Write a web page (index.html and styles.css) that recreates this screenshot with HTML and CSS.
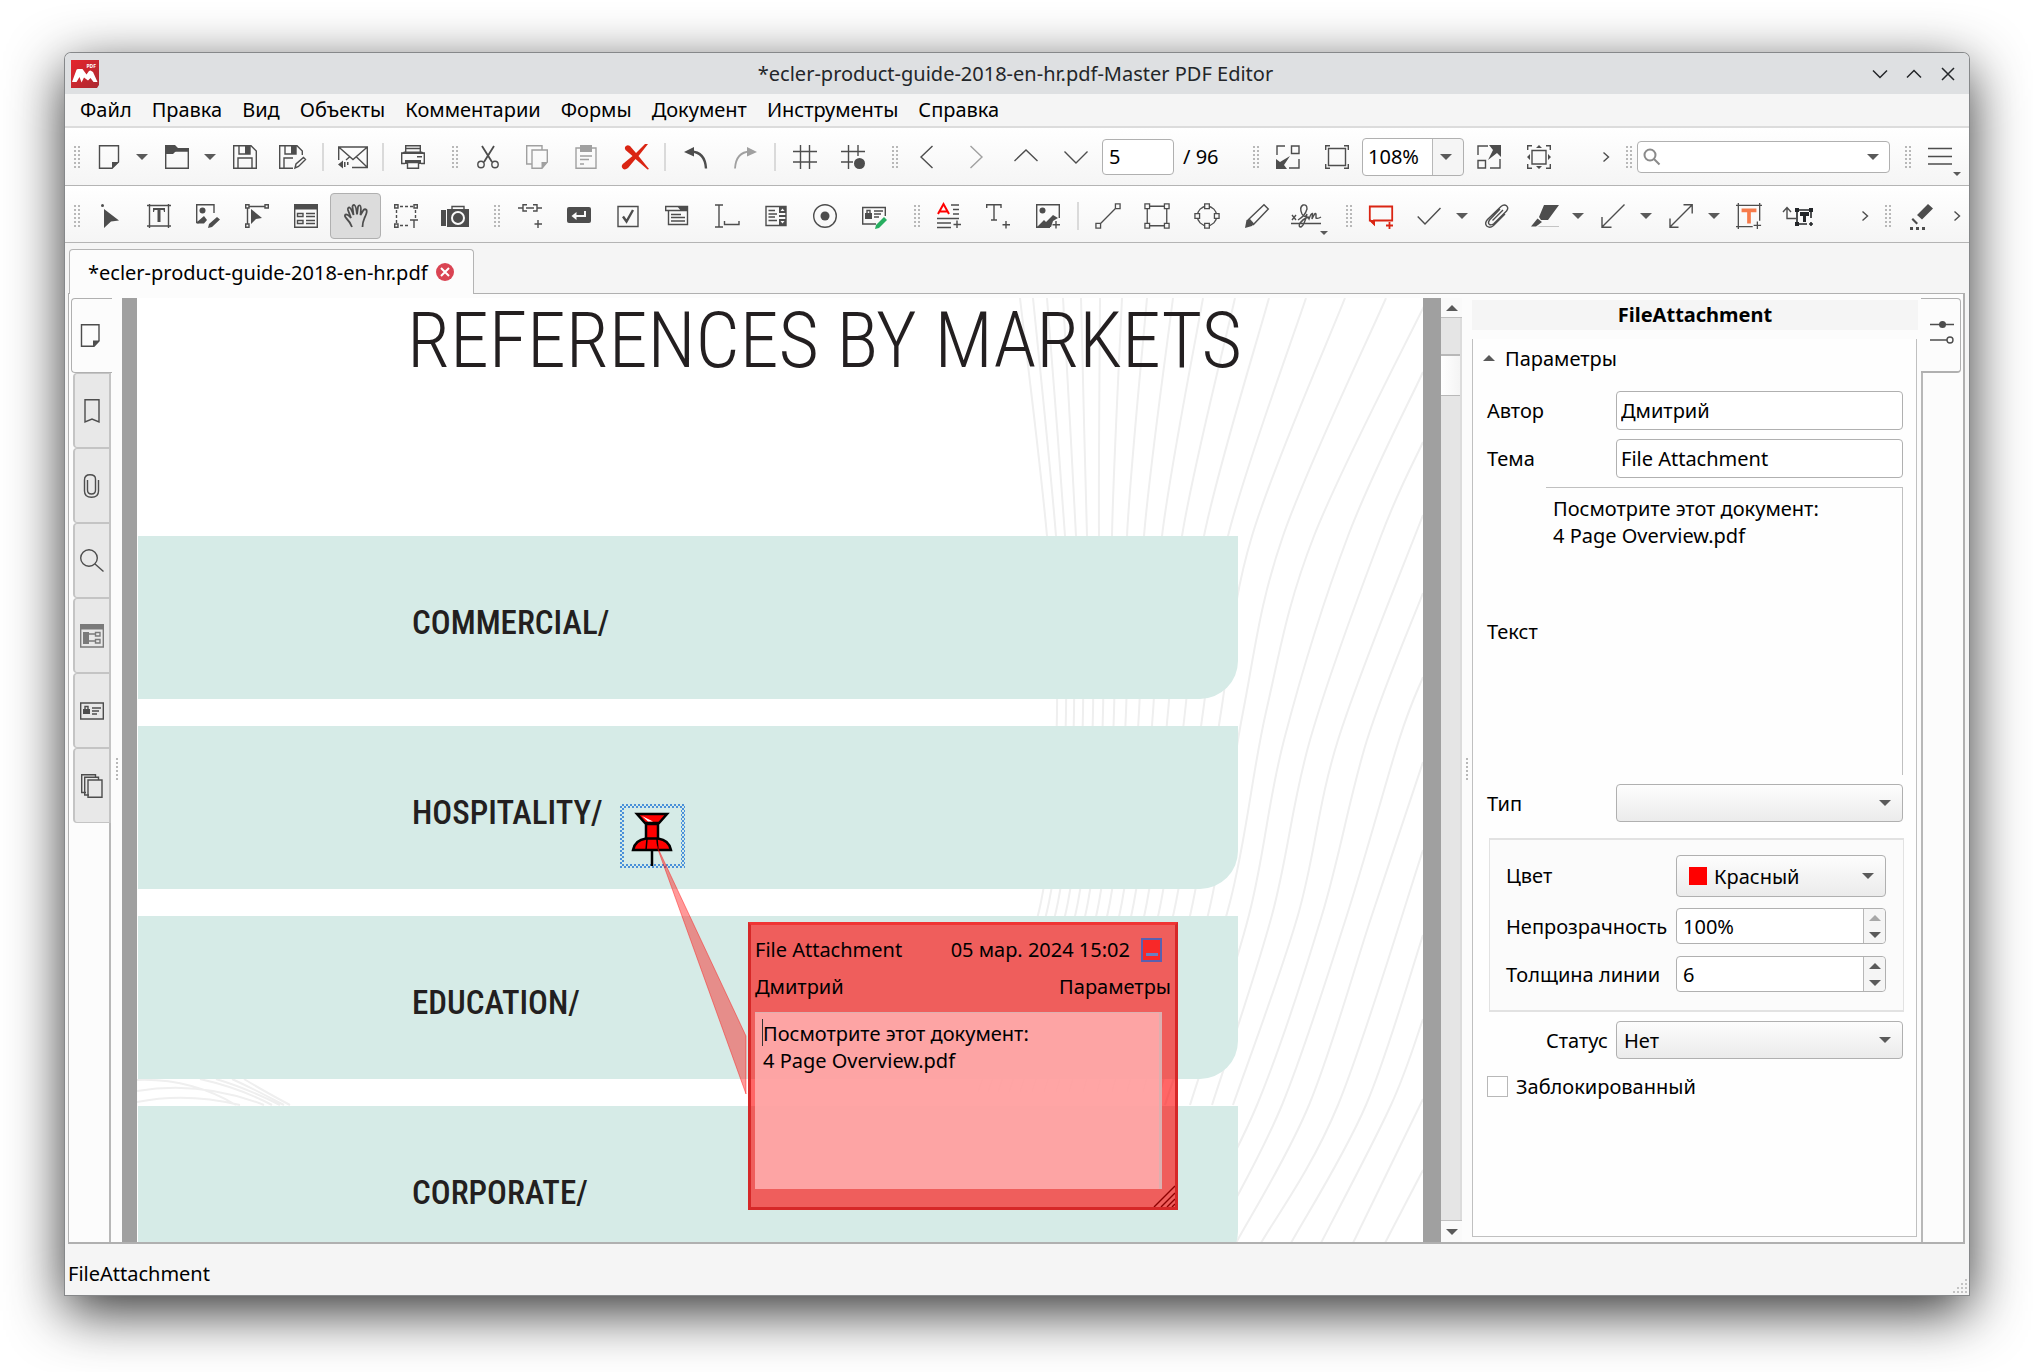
FILE: index.html
```html
<!DOCTYPE html>
<html lang="ru">
<head>
<meta charset="utf-8">
<title>*ecler-product-guide-2018-en-hr.pdf-Master PDF Editor</title>
<link rel="stylesheet" href="styles.css">
</head>
<body>
<div class="window">
  <header class="titlebar">
    <svg class="logo" viewBox="0 0 28 28"><defs><linearGradient id="lg" x1="0" y1="0" x2="1" y2="1"><stop offset="0" stop-color="#e6242b"/><stop offset="1" stop-color="#ab2a32"/></linearGradient></defs><path d="M0 0H28V25L26 28H0Z" fill="url(#lg)"/><path d="M1 22L5.500 9.800Q6 9 7 9H11.500L15.500 14.500L18 11Q18.600 10.400 19.500 10.400L22 12L26.500 22H22.500L19.500 18L17 20.500L13 17.500L10.500 22.500L8.500 17L5.500 22Z" fill="#fff"/><text x="15.500" y="7.600" class="logo-text">PDF</text></svg>
    <h1 class="title">*ecler-product-guide-2018-en-hr.pdf-Master PDF Editor</h1>
    <div class="winbtns">
      <button class="winbtn" aria-label="Свернуть"><svg viewBox="0 0 16 16"><path d="M1 4.500L8 11.500L15 4.500"/></svg></button>
      <button class="winbtn" aria-label="Развернуть"><svg viewBox="0 0 16 16"><path d="M1 11.500L8 4.500L15 11.500"/></svg></button>
      <button class="winbtn" aria-label="Закрыть"><svg viewBox="0 0 16 16"><path d="M2 2L14 14M14 2L2 14"/></svg></button>
    </div>
  </header>

  <nav class="menubar">
    <button class="menu">Файл</button><button class="menu">Правка</button><button class="menu">Вид</button><button class="menu">Объекты</button><button class="menu">Комментарии</button><button class="menu">Формы</button><button class="menu">Документ</button><button class="menu">Инструменты</button><button class="menu">Справка</button>
  </nav>

  <div class="toolbar">
    <span class="grip grip-first"></span>
    <button class="tool" aria-label="Создать"><svg class="ic" viewBox="0 0 24 24"><path d="M2.500 .7H21.500V17L15 23.300H2.500Z"/><path class="f" d="M15 23.500V17H21.700Z"/></svg></button>
    <button class="drop" aria-label="Создать, меню"></button>
    <button class="tool" aria-label="Открыть"><svg class="ic" viewBox="0 0 24 24"><path d="M.7 6H23.300V23.300H.7Z"/><path class="f" d="M0 0H10L13 3H24V6H11L8 9H0Z"/></svg></button>
    <button class="drop" aria-label="Открыть, меню"></button>
    <button class="tool" aria-label="Сохранить"><svg class="ic" viewBox="0 0 24 24"><path d="M.7 .7H18L23.300 6V23.300H.7ZM5 23V13H19V23M6 1V9H17V1"/><path class="f" d="M12 1H17V9H12Z"/></svg></button>
    <button class="tool" aria-label="Сохранить как"><svg class="ic wide" viewBox="0 0 28 24"><path d="M14 23.300H.7V.7H18L23.300 6V10M5 23V13H14M6 1V9H17V1M16 23L17 19L24.500 12.500L26.500 14.500L19.500 21.500Z"/><path class="f" d="M12 1H17V9H12Z"/></svg></button>
    <span class="sep"></span>
    <button class="tool" aria-label="Отправить"><svg class="ic mail" viewBox="0 0 30 24"><path d="M.7 15V2H29.300V22.500H14M.7 2L15 14.500L29.300 2M29 22L18.500 12M11.500 12L8 15"/><path class="f" d="M0 19.500L5 15.500V23.500ZM6 17H7.500V22H6ZM9 17H10.500V20H9Z"/></svg></button>
    <span class="sep"></span>
    <button class="tool" aria-label="Печать"><svg class="ic" viewBox="0 0 24 24"><path d="M4.700 8V.7H19.300V8M5 3.500H19"/><path d="M4 18.500H.7V8H23.300V18.500H20"/><path class="f" d="M3 6.500H21L24 9H0ZM16 11H21V12.500H16ZM4 15H20V19H4Z"/><path class="w" d="M6.500 17.500H17.500V23.300H6.500Z"/></svg></button>
    <span class="grip"></span>
    <div class="group g4">
      <button class="tool" aria-label="Вырезать"><svg class="ic" viewBox="0 0 24 24"><path class="t2" d="M6 1L16 17M18 1L8 17"/><circle cx="5" cy="19.500" r="3.200"/><circle cx="19" cy="19.500" r="3.200"/></svg></button>
      <button class="tool off" aria-label="Копировать"><svg class="ic" viewBox="0 0 24 24"><path d="M7 19H1.700V.7H17V5"/><path d="M7 5H22.300V17L17 23.300H7Z"/><path class="f" d="M16.500 23.500V17H22.500Z"/></svg></button>
      <button class="tool off" aria-label="Вставить"><svg class="ic" viewBox="0 0 24 24"><path d="M2 3H22V23.300H2ZM6 11H18M6 14.500H15M6 19H10"/><path class="f" d="M6 0H18V7H6Z"/></svg></button>
      <button class="tool" aria-label="Удалить"><svg class="ic x" viewBox="0 0 28 26"><path class="red" d="M4 3Q6 0 9 2L15 9L24 0H27L17.500 12L28 25L26.500 25.500L14.500 15L7 24Q3 27 1 23.500Q0 21 3 19L11.500 12L4.500 6Q3.500 4.500 4 3Z"/></svg></button>
    </div>
    <span class="sep"></span>
    <button class="tool t50" aria-label="Отменить"><svg class="ic" viewBox="0 0 24 24"><path class="t3" d="M7 6.500Q21 7 22 23.500"/><path class="f" d="M0 7L10 2V11.500Z"/></svg></button>
    <button class="tool off" aria-label="Повторить"><svg class="ic" viewBox="0 0 24 24"><path class="t2" d="M17 6.500Q3 7 2 23.500"/><path class="f" d="M24 7L14 2V11.500Z"/></svg></button>
    <span class="sep"></span>
    <button class="tool" aria-label="Сетка"><svg class="ic" viewBox="0 0 24 24"><path d="M7.500 0V24M16.500 0V24M0 6.500H24M0 17H24"/></svg></button>
    <button class="tool" aria-label="Привязка к сетке"><svg class="ic" viewBox="0 0 24 24"><path d="M7.500 0V24M17 0V11M0 6.500H24M0 17H12"/><circle class="f" cx="18.500" cy="18.500" r="5.500"/></svg></button>
    <span class="grip"></span>
    <button class="tool" aria-label="Назад"><svg class="ic" viewBox="0 0 24 24"><path d="M17.500 1L6 12L17.500 23"/></svg></button>
    <button class="tool t50 off" aria-label="Вперёд"><svg class="ic" viewBox="0 0 24 24"><path d="M6.500 1L18 12L6.500 23"/></svg></button>
    <button class="tool t50" aria-label="Предыдущая страница"><svg class="ic" viewBox="0 0 24 24"><path d="M.5 16L12 5L23.500 16"/></svg></button>
    <button class="tool t50" aria-label="Следующая страница"><svg class="ic" viewBox="0 0 24 24"><path d="M.5 6.500L12 18L23.500 6.500"/></svg></button>
    <input class="field page-no" id="pageno" type="text" value="5"><label class="page-total" for="pageno">/ 96</label>
    <span class="grip"></span>
    <button class="tool" aria-label="Уменьшить"><svg class="ic" viewBox="0 0 24 24"><path d="M1 10V1H9M15.500 1H23V8.500H15.500ZM23 14V23H13"/><path class="f" d="M0 24V14L4 17L14 11L8 20L11 24Z"/></svg></button>
    <button class="tool t50" aria-label="Вся страница"><svg class="ic" viewBox="0 0 24 24"><path d="M3.500 3.500H20.500V20.500H3.500ZM.7 5V.7H5M19 .7H23.300V5M.7 19V23.300H5M19 23.300H23.300V19"/></svg></button>
    <div class="zoom"><select class="zoom-select" aria-label="Масштаб"><option>108%</option></select></div>
    <button class="tool t50" aria-label="Увеличить"><svg class="ic" viewBox="0 0 24 24"><path d="M1 10V1H11M1 15.500H8.500V23H1ZM23 14V23H13"/><path class="f" d="M24 0V12L20 8L11 15L16 5L12 0Z"/></svg></button>
    <button class="tool t50" aria-label="По ширине"><svg class="ic" viewBox="0 0 24 24"><path d="M5 5.500H19V19H5ZM.7 5V.7H5M19 .7H23.300V5M.7 19V23.300H5M19 23.300H23.300V19"/><path class="f" d="M9 3L12 0L15 3ZM9 21L12 24L15 21ZM3 9L0 12L3 15ZM21 9L24 12L21 15Z"/></svg></button>
    <button class="more more-fixed" aria-label="Ещё"><svg viewBox="0 0 8 12"><path d="M1.500 1.500L6.500 6L1.500 10.500"/></svg></button>
    <span class="grip grip-near"></span>
    <div class="search"><svg class="search-ic" viewBox="0 0 18 18"><circle cx="7" cy="7" r="5.500"/><path d="M11 11L16.500 16.500"/></svg><input class="search-input" type="text" aria-label="Поиск"><button class="drop search-drop" aria-label="Параметры поиска"></button></div>
    <span class="grip"></span>
    <button class="tool menu-tool" aria-label="Меню"><svg class="ic" viewBox="0 0 24 24"><path d="M0 3.500H24M0 11.500H24M0 19H24"/></svg><i class="corner"></i></button>
  </div>

  <div class="toolbar toolbar-2">
    <span class="grip grip-first"></span>
    <div class="group g8">
      <button class="tool" aria-label="Выделение"><svg class="ic" viewBox="0 0 24 24"><path class="f" d="M6 5L21 16.500L13 17.500L6 24Z"/><circle class="f" cx="4.500" cy="1.500" r="1.500"/></svg></button>
      <button class="tool" aria-label="Текст"><svg class="ic" viewBox="0 0 24 24"><path d="M2.500 0V24M21.500 0V24M0 1.500H24M0 22H24"/><path class="f" d="M6 4H18V8H17L16.500 6H13.500V18H10.500V6H7.500L7 8H6Z"/></svg></button>
      <button class="tool" aria-label="Изображение"><svg class="ic" viewBox="0 0 24 24"><path d="M3 18.500H.7V.7H18V9"/><circle class="f" cx="6.500" cy="6.500" r="3"/><path class="f" d="M1 18L8 12L11 16L8 19.500H1ZM12 24L13 20L21 13L24 15.500L16 23Z"/></svg></button>
      <button class="tool" aria-label="Узлы"><svg class="ic" viewBox="0 0 24 24"><path d="M2.500 4V20M4 2.500H20M.7 .7H4V4H.7ZM20 .7H23.300V4H20ZM.7 20H4V23.300H.7Z"/><path class="f" d="M6 5L17 14L11 15L6 20Z"/></svg></button>
      <button class="tool" aria-label="Формы"><svg class="ic" viewBox="0 0 24 24"><path d="M.7 .7H23.300V23.300H.7ZM3.500 9.500H9V12.500H3.500ZM3.500 16.500H9V19.500H3.500ZM12 9.500H21M12 12.500H21M12 16.500H21M12 19.500H21"/><path class="f" d="M0 0H24V5.500H0Z"/></svg></button>
      <button class="tool on" aria-label="Рука" aria-pressed="true"><svg class="ic" viewBox="0 0 24 24"><path class="t2" d="M8 23Q6 18 2.500 14.500Q0 12 1.500 10.500Q3.500 10 7 14L4 6Q3.500 3.500 5.500 3.500Q7 4 9.500 11L8.500 3Q8.500 .8 10.300 1Q12 1.500 13 10.500L14 3Q14.500 1 16 1.500Q17.500 2 16.500 11L19.500 6Q21 4.500 22.500 6Q23.500 8 20.500 14Q18.500 18.500 18.500 23"/></svg></button>
      <button class="tool" aria-label="Выделение текста"><svg class="ic" viewBox="0 0 24 24"><path d="M.7 .7H4V4H.7ZM20 .7H23.300V4H20ZM.7 20H4V23.300H.7ZM16 16H24M20 16V24"/><path class="dash" d="M6 2.500H19M2.500 6V19M6 21.500H15M21.500 6V14"/></svg></button>
      <button class="tool" aria-label="Снимок"><svg class="ic mail" viewBox="0 0 30 24"><path d="M12 5V2.500H24V5"/><path class="f" d="M1 6H6V22H1ZM7 5H29V23H7Z"/><circle class="k" cx="18" cy="14" r="6"/></svg></button>
    </div>
    <span class="grip"></span>
    <div class="group g8">
      <button class="tool" aria-label="Ссылка"><svg class="ic" viewBox="0 0 24 24"><path d="M0 4H5M9 .8H5V7H9M8 4H16M15 .8H19V7H15M19 4H24M20 16V24M16.500 20H24"/></svg></button>
      <button class="tool" aria-label="Кнопка"><svg class="ic" viewBox="0 0 24 24"><rect class="f" x="0" y="3" width="24" height="16" rx="2"/><path class="k2" d="M18 7V12H8"/><path class="wf" d="M4.500 12L9.500 8V16Z"/></svg></button>
      <button class="tool" aria-label="Флажок"><svg class="ic" viewBox="0 0 24 24"><path d="M2 2.500H22V22.500H2Z"/><path class="t3" d="M7 12.500L10.500 17.500L17 6"/></svg></button>
      <button class="tool" aria-label="Список"><svg class="ic" viewBox="0 0 24 24"><path d="M.7 2.500H22.500V6.500H.7ZM3.500 7V20.500H22.500V6M6 10.500H16M6 13.500H20M6 17H20"/><path class="f" d="M12 2H23V7H16Z"/></svg></button>
      <button class="tool" aria-label="Текстовое поле"><svg class="ic" viewBox="0 0 24 24"><path d="M0 1H8M4 1V23M0 23H8M9.500 17V20.500H24V17"/></svg></button>
      <button class="tool" aria-label="Поле списка"><svg class="ic" viewBox="0 0 24 24"><path d="M2 2.500H22V21.500H2ZM4.500 6.500H11M4.500 10H13M4.500 13H11M4.500 16.500H13"/><path class="f" d="M15 2H22V9H15ZM15 11H22V13H15ZM15 15H22V22H15Z"/><path class="wf" d="M16.500 7L18.500 4.500L20.500 7ZM16.500 17L18.500 19.500L20.500 17Z"/></svg></button>
      <button class="tool" aria-label="Переключатель"><svg class="ic" viewBox="0 0 24 24"><circle cx="12" cy="12" r="11.300"/><circle class="f" cx="12" cy="12" r="4.500"/></svg></button>
      <button class="tool" aria-label="Подпись"><svg class="ic" viewBox="0 0 24 24"><path d="M14 20H.7V3.500H23.300V12M12 7H21M12 10H19M12 13H17M5 9V6.500H8V9"/><path class="f" d="M3 9H10V15H3Z"/><path class="green" d="M13 25L14 21L22 13L25 16L17 24Z"/></svg></button>
    </div>
    <span class="grip"></span>
    <button class="tool" aria-label="Правка текста"><svg class="ic" viewBox="0 0 24 24"><path class="rs" d="M1 10L6.500 0L12 10M3 7.500H10"/><path d="M14 1H22M16 5.500H22M16 10H22M0 14.500H22M0 19H14M0 23.500H14M20 16.500V24M16.500 20.500H24"/></svg></button>
    <button class="tool t50" aria-label="Вставить текст"><svg class="ic" viewBox="0 0 24 24"><path d="M.7 4V.7H15V4M8 1V16M5 16H11M20 17V24.500M16.500 20.700H24"/></svg></button>
    <button class="tool t50" aria-label="Вставить изображение"><svg class="ic" viewBox="0 0 24 24"><path d="M14 23.300H.7V.7H23.300V14M20 17V24.500M16.500 20.700H24"/><circle class="f" cx="6.500" cy="6.500" r="3"/><path class="f" d="M1 23L8 16L10 18L17 11L22 14L17 17L15 23Z"/></svg></button>
    <span class="sep sep-near"></span>
    <div class="group g5">
      <button class="tool" aria-label="Линия"><svg class="ic big" viewBox="0 0 28 28"><path d="M6 22L22 6M1 22H6V27H1ZM22 1H27V6H22Z"/></svg></button>
      <button class="tool" aria-label="Прямоугольник"><svg class="ic big" viewBox="0 0 28 28"><path d="M6 3.500H22M6 24.500H22M3.500 6V22M24.500 6V22M1 1H6V6H1ZM22 1H27V6H22ZM1 22H6V27H1ZM22 22H27V27H22Z"/></svg></button>
      <button class="tool" aria-label="Эллипс"><svg class="ic big" viewBox="0 0 28 28"><circle cx="14" cy="14" r="10.500"/><path class="w" d="M11.500 1H16.500V6H11.500ZM11.500 22H16.500V27H11.500ZM1 11.500H6V16.500H1ZM22 11.500H27V16.500H22Z"/></svg></button>
      <button class="tool" aria-label="Карандаш"><svg class="ic" viewBox="0 0 24 24"><path d="M3 16L19 .8L23.300 5L8 21"/><path class="f" d="M0 24L1.500 16L5 15L9 19.500L7 22Z"/></svg></button>
      <button class="tool menu-tool" aria-label="Подписать"><svg class="ic mail" viewBox="0 0 30 24"><path d="M0 19.500H30M1 11L5 16M5 11L1 16M7 16Q14 12 16 5Q16 0 12 1Q8 3 11 10Q14 15 16 10Q13 22 10 23Q7 23 9 19Q12 15 17 13L18 15Q20 9 21.500 9.500L21 15Q24 8 25 10L25 14Q27 15 30 13"/></svg><i class="corner"></i></button>
    </div>
    <span class="grip"></span>
    <button class="tool" aria-label="Примечание"><svg class="ic" viewBox="0 0 24 24"><path class="ds" d="M.8 2.500H23.200V16.500H5V20L1.500 16.500H.8ZM20.500 18V25M17 21.500H24"/><path class="red" d="M0 16H6V22Z"/></svg></button>
    <button class="tool" aria-label="Галочка"><svg class="ic" viewBox="0 0 24 24"><path d="M.7 12.500L8 20L23.500 4"/></svg></button>
    <button class="drop" aria-label="Галочка, меню"></button>
    <button class="tool" aria-label="Вложение"><svg class="ic" viewBox="0 0 24 24"><path d="M15 5L4.500 16Q2.500 19 4.500 20.500Q6.500 21.500 9 19.500L21.500 7Q24 4 21.500 1.800Q19 -.2 16 2.500L2.500 15.500Q-1 19.500 2 22.300Q5 24.500 8.500 21.500L20 10M7.500 16.500L18 6"/></svg></button>
    <button class="tool" aria-label="Выделение цветом"><svg class="ic big" viewBox="0 0 28 24"><path class="f" d="M13 1H28L17 16H10L8 13ZM6.500 14.500L11 18L5 22.500H0Z"/><path class="pale" d="M9 22H28V23H6Z"/></svg></button>
    <button class="drop" aria-label="Выделение цветом, меню"></button>
    <button class="tool" aria-label="Стрелка"><svg class="ic" viewBox="0 0 24 24"><path d="M23.500 .5L1 23M1 13V23.200H10.500"/></svg></button>
    <button class="drop" aria-label="Стрелка, меню"></button>
    <button class="tool" aria-label="Двойная стрелка"><svg class="ic" viewBox="0 0 24 24"><path d="M23 1L1 23M1 14.500V23.200H9.500M14.500 .8H23.200V9.500"/></svg></button>
    <button class="drop" aria-label="Двойная стрелка, меню"></button>
    <button class="tool" aria-label="Текстовое примечание"><svg class="ic big" viewBox="0 0 28 28"><path d="M0 2.500H28M2.500 0V28M0 25.500H18M25.500 0V19M23 20V28M19 24H27"/><path class="or" d="M6 6H22V10H16V22H12V10H6Z"/></svg></button>
    <button class="tool t50" aria-label="Выноска"><svg class="ic mail" viewBox="0 0 30 24"><path d="M13 14.500H4V4M0 8L4 3.500L8 8"/><path class="bk" d="M14 6H28V14M14 6V20H24M26 20H30M28 18V22"/><path class="bf" d="M17 8H26V12H23V18H20V12H17ZM12 4H16V8H12ZM26 4H30V8H26ZM12 18H16V22H12Z"/></svg></button>
    <button class="more more-push" aria-label="Ещё"><svg viewBox="0 0 8 12"><path d="M1.500 1.500L6.500 6L1.500 10.500"/></svg></button>
    <span class="grip grip-near"></span>
    <button class="tool t50" aria-label="Маркер"><svg class="ic" viewBox="0 0 24 24"><path class="f" d="M8 11L19 0L24 4.500L13 15.500ZM4 14L9 19L7.500 20.500L2.500 15.500ZM1 23H4V26H1ZM7 23H10V26H7ZM13 23H16V26H13Z"/></svg></button>
    <button class="more" aria-label="Ещё"><svg viewBox="0 0 8 12"><path d="M1.500 1.500L6.500 6L1.500 10.500"/></svg></button>
  </div>

  <div class="tabstrip">
    <div class="doctab"><span>*ecler-product-guide-2018-en-hr.pdf</span><button class="tabclose" aria-label="Закрыть вкладку"><svg viewBox="0 0 18 18"><circle cx="9" cy="9" r="9"/><path d="M5 5L13 13M13 5L5 13"/></svg></button></div>
  </div>

  <main class="pane">
    <nav class="rail">
      <button class="side side-on" aria-label="Страницы"><svg class="sic" viewBox="0 0 24 24"><path d="M2.500 .7H20V17L15 22.300H2.500Z"/><path class="f" d="M14 22.500V16.500H20.500Z"/></svg></button>
      <button class="side" aria-label="Закладки"><svg class="sic" viewBox="0 0 24 24"><path d="M5 .7H19V23L12 20L5 23Z"/></svg></button>
      <button class="side" aria-label="Вложения"><svg class="sic" viewBox="0 0 24 24"><path d="M7.500 6V16Q7.500 20 11.500 20Q15.500 20 15.500 16V5Q15.500 .8 10 .8Q4.500 .8 4.500 6V17Q4.500 23.300 11.500 23.300Q18.500 23.300 18.500 17V6"/></svg></button>
      <button class="side" aria-label="Поиск"><svg class="sic" viewBox="0 0 24 24"><circle cx="9" cy="9" r="8.300"/><path d="M15 15L23.500 22.500"/></svg></button>
      <button class="side off" aria-label="Формы"><svg class="sic" viewBox="0 0 24 24"><path d="M.7 1H23.300V23H.7ZM9 10H15M9 17H15M15.500 8.500H20V12H15.500ZM15.500 15.500H20V19H15.500Z"/><path class="f" d="M0 0H24V5.500H0ZM3 8H9V20H3Z"/></svg></button>
      <button class="side" aria-label="Подписи"><svg class="sic" viewBox="0 0 24 24"><path d="M.7 4H23.300V20H.7ZM12 9H21M12 12H19M12 15H17M5 10V7.500H8V10"/><path class="f" d="M3 10H10V15H3Z"/></svg></button>
      <button class="side" aria-label="Слои"><svg class="sic" viewBox="0 0 24 24"><path d="M6 18.500H1.700V.7H15.500V3M9 21H4.700V3.200H18.500V6"/><path d="M8 6H22V23.300H8Z"/></svg></button>
    </nav>
    <div class="splitter"><i class="dots"></i></div>
    <section class="viewer">
      <article class="page">
        <svg class="waves" id="waves" viewBox="137 298 1286 945" preserveAspectRatio="xMinYMin slice"><g id="wave-lines"></g><path d="M137 1080Q190 1078 236 1105M137 1091Q200 1080 264 1105M137 1102Q186 1092 240 1105M200 1079Q240 1088 272 1105M216 1079Q246 1088 280 1105M232 1079Q256 1090 284 1105M244 1079Q262 1090 290 1105"/></svg>
        <h2 class="page-title">REFERENCES BY MARKETS</h2>
        <ul class="markets">
          <li class="market">COMMERCIAL/</li>
          <li class="market">HOSPITALITY/</li>
          <li class="market">EDUCATION/</li>
          <li class="market">CORPORATE/</li>
        </ul>
        <div class="pin"><svg viewBox="0 0 42 54"><path d="M21 38V54" stroke="#000" stroke-width="2.500"/><path d="M6 2H36L28 11H14Z" fill="#f00" stroke="#000" stroke-width="2.500"/><path d="M11 4L17 9.500H22Z" fill="#fff"/><path d="M15 12H27V28H15Z" fill="#f00" stroke="#000" stroke-width="2.500"/><path d="M2 38Q4 28 15 26.500H27Q38 28 40 38Z" fill="#f00" stroke="#000" stroke-width="2.500"/><path d="M16 27L15 38M26 27L27 38" stroke="#000" stroke-width="1.500"/></svg></div>
        <svg class="leader" viewBox="0 0 92 252"><path d="M1 1L91 193V251Z"/></svg>
        <form class="note">
          <div class="note-row"><span>File Attachment</span><span class="note-date">05 мар. 2024 15:02</span><button class="note-min" type="button" aria-label="Свернуть заметку"></button></div>
          <div class="note-row note-row-2"><span>Дмитрий</span><a class="note-link" href="#params">Параметры</a></div>
          <textarea class="note-text" aria-label="Текст заметки">Посмотрите этот документ:
4 Page Overview.pdf</textarea>
          <i class="caret"></i>
          <svg class="note-grip" viewBox="0 0 22 22"><path d="M1 22L22 1M8 22L22 8M14 22L22 14M19 22L22 19"/></svg>
        </form>
      </article>
    </section>
    <div class="scroll"><button class="scroll-btn scroll-up" aria-label="Вверх"></button><div class="track"><i class="thumb"></i></div><button class="scroll-btn scroll-down" aria-label="Вниз"></button></div>
    <div class="splitter"><i class="dots"></i></div>
    <aside class="panel">
      <h2 class="panel-title">FileAttachment</h2>
      <form class="frame" id="params">
        <button class="section" type="button">Параметры</button>
        <div class="form">
          <label for="author">Автор</label><input class="field c3" id="author" type="text" value="Дмитрий">
          <label for="subject">Тема</label><input class="field c3" id="subject" type="text" value="File Attachment">
          <label for="body">Текст</label><textarea class="body c23" id="body">Посмотрите этот документ:
4 Page Overview.pdf</textarea>
          <label for="kind">Тип</label><div class="combo c3"><select id="kind"><option></option></select></div>
          <fieldset class="box">
            <label for="color">Цвет</label><div class="combo"><i class="swatch"></i><select class="with-swatch" id="color"><option>Красный</option></select></div>
            <label for="opacity">Непрозрачность</label><div class="spin"><input id="opacity" type="text" value="100%"><div class="steps"><button class="step step-up step-off" type="button" aria-label="Больше"></button><button class="step step-down" type="button" aria-label="Меньше"></button></div></div>
            <label for="width">Толщина линии</label><div class="spin"><input id="width" type="text" value="6"><div class="steps"><button class="step step-up" type="button" aria-label="Больше"></button><button class="step step-down" type="button" aria-label="Меньше"></button></div></div>
          </fieldset>
          <label class="c2" for="status">Статус</label><div class="combo c3"><select id="status"><option>Нет</option></select></div>
          <label class="locked"><input type="checkbox">Заблокированный</label>
        </div>
      </form>
    </aside>
    <nav class="rail-right"><button class="side-right" aria-label="Свойства"><svg class="sic" viewBox="0 0 24 24"><path d="M0 4.500H24M0 20H17"/><circle class="f" cx="12.500" cy="4.500" r="3.500"/><circle cx="20" cy="20" r="3"/></svg></button></nav>
  </main>

  <footer class="status"><span>FileAttachment</span><svg class="size" viewBox="0 0 14 14"><path d="M12 0h2v2h-2zM8 4h2v2h-2zM12 4h2v2h-2zM4 8h2v2h-2zM8 8h2v2h-2zM12 8h2v2h-2zM0 12h2v2h-2zM4 12h2v2h-2zM8 12h2v2h-2zM12 12h2v2h-2z"/></svg></footer>
</div>
<script src="waves.js"></script>
</body>
</html>
```

FILE: styles.css
```css
* { box-sizing: border-box; }
body {
  margin: 0; height: 100vh; padding: 53px 64px 77px 65px; display: flex; background: #fff;
  font: 20px/27px "Noto Sans", sans-serif; color: #000;
}
button, input, select, textarea { font: inherit; color: inherit; margin: 0; border-radius: 0; }
button { background: none; border: 0; padding: 0; }
.window {
  flex: 1; min-width: 0; display: flex; flex-direction: column; background: #f5f5f5;
  border-radius: 6px 6px 0 0; box-shadow: 0 0 0 1px #86888a, 0 16px 56px rgba(0,0,0,.82);
}

.titlebar {
  height: 41px; display: flex; align-items: center; background: #dee0e2; padding: 0 13px 0 6px;
  border-radius: 6px 6px 0 0;
}
.logo { width: 28px; height: 28px; }
.logo-text { font: bold 5px "Noto Sans", sans-serif; fill: #fff; }
.title { flex: 1; margin: 0; padding-left: 60px; text-align: center; font-size: 20px; font-weight: 400; color: #232629; }
.winbtns { display: flex; gap: 18px; }
.winbtn { width: 16px; height: 16px; }
.winbtn svg { display: block; fill: none; stroke: #232629; stroke-width: 1.5; }

.menubar { display: flex; height: 34px; border-bottom: 2px solid #dcdcdc; padding: 0 0 2px 5px; }
.menu { padding: 0 10px; }

.toolbar {
  display: flex; align-items: center; height: 58px; padding: 0 5px 0 8px; border-bottom: 1px solid #b4b4b4;
  background: linear-gradient(#fff, #f5f5f5);
}
.toolbar-2 { height: 57px; padding-right: 1px; padding-top: 4px; }
.toolbar > * { flex-shrink: 0; }
.grip { width: 7px; height: 24px; margin: 0 5px 0 14px; background: radial-gradient(circle, #b8b8b8 1px, transparent 1px) 0 0 / 4px 4px; }
.grip-first { margin-left: 0; }
.grip-near { margin-left: 8px; }
.sep { width: 2px; height: 28px; margin: 0 5px; background: #dadada; }
.sep-near { margin: 0 4px; }
.group { display: flex; }
.group .tool { flex: 1; }
.g4 { width: 196px; }
.g5 { width: 248px; }
.g8 { width: 394px; }
.tool { width: 48px; height: 46px; display: flex; align-items: center; justify-content: center; color: #4d4d4d; }
.t50 { width: 50px; }
.off { color: #a0a0a0; }
.on { background: #dcdcdc; border: 1px solid #b0b0b0; border-radius: 4px; }
.ic, .sic { display: block; width: 24px; height: 24px; overflow: visible; fill: none; stroke: currentColor; stroke-width: 1.4; }
.ic.wide { width: 28px; }
.ic.mail { width: 30px; }
.ic.x, .ic.big { width: 28px; height: 26px; }
.ic .f, .sic .f { fill: currentColor; stroke: none; }
.ic .t2 { stroke-width: 1.8; }
.ic .t3 { stroke-width: 2.4; }
.ic .w { fill: #fafafa; }
.ic .k { stroke: #fafafa; stroke-width: 2; }
.ic .k2 { stroke: #fafafa; stroke-width: 2; }
.ic .wf { fill: #fafafa; stroke: none; }
.ic .pale { fill: #c4c4c4; stroke: none; }
.ic .red { fill: #da2513; stroke: none; }
.ic .ds { stroke: #da2513; stroke-width: 1.8; }
.ic .rs { stroke: #f00; stroke-width: 2; }
.ic .or { fill: #f67b4b; stroke: none; }
.ic .green { fill: #27ae60; stroke: none; }
.ic .bk { stroke: #232629; stroke-width: 1.6; }
.ic .bf { fill: #232629; stroke: none; }
.dash { stroke-dasharray: 3 2; }
.drop { width: 18px; height: 24px; margin-right: 2px; display: flex; align-items: center; justify-content: center; }
.drop::before, .corner {
  content: ""; border: solid transparent; border-width: 6px 6px 0; border-top-color: #5a5a5a;
}
.menu-tool { position: relative; }
.corner { position: absolute; right: 3px; bottom: 4px; border-width: 4px 4px 0; }
.more { width: 22px; height: 24px; display: flex; align-items: center; justify-content: center; }
.more svg { width: 8px; height: 12px; fill: none; stroke: #4d4d4d; stroke-width: 1.4; }
.more-fixed { margin-left: 31px; }
.more-push { margin-left: auto; }
.field { border: 1px solid #b0b0b0; border-radius: 4px; background: #fff; min-width: 0; padding: 0 4px; height: 39px; }
.page-no { width: 72px; height: 36px; margin-left: 1px; padding: 0 6px; }
.page-total { width: 64px; padding-left: 9px; }
.zoom {
  position: relative; width: 102px; height: 38px; border: 1px solid #b0b0b0; border-radius: 4px;
  background: linear-gradient(90deg, #fff 69px, #b8b8b8 69px, #b8b8b8 70px, #f5f5f5 70px);
}
.zoom-select { appearance: none; width: 100%; height: 100%; border: 0; background: none; padding: 0 5px; }
.zoom::after, .combo::after {
  content: ""; position: absolute; right: 11px; top: 50%; margin-top: -3px; pointer-events: none;
  border: solid transparent; border-width: 6px 6px 0; border-top-color: #5a5a5a;
}
.toolbar > .search {
  flex: 1 1 252px; min-width: 0; display: flex; align-items: center; height: 32px; border: 1px solid #b0b0b0; border-radius: 4px;
  background: #fff; padding: 0 5px;
}
.search-ic { flex: none; width: 18px; height: 18px; fill: none; stroke: #8a8a8a; stroke-width: 2; }
.search-input { flex: 1; min-width: 0; height: 28px; border: 0; background: none; }
.search-drop { flex: none; }

.tabstrip { padding: 6px 0 0 4px; height: 51px; }
.doctab {
  display: inline-flex; align-items: center; gap: 8px; height: 45px; padding: 0 19px 0 18px; position: relative; z-index: 1;
  background: #fcfcfc; border: 1px solid #b4b4b4; border-bottom: 0; border-radius: 4px 4px 0 0;
}
.tabclose { width: 18px; height: 18px; }
.tabclose svg { display: block; fill: #da4453; stroke: #fff; stroke-width: 2; }
.tabclose circle { stroke: none; }

.pane {
  flex: 1; display: flex; min-height: 0; margin: -1px 4px 0 3px; padding-top: 4px; background: #fcfcfc;
  border: solid #b0b0b0; border-width: 1px 2px 2px 1px;
}
.rail { width: 43px; padding-left: 2px; display: flex; flex-direction: column; align-items: flex-end; background: linear-gradient(#b8b8b8, #b8b8b8) 40px 75px / 2px 100% no-repeat; }
.side {
  width: 38px; height: 75px; margin-right: 1px; display: flex; align-items: center; justify-content: center; color: #4d4d4d;
  background: #e8e8e8; border: 2px solid #c4c4c4; border-width: 1px 2px; border-radius: 4px 0 0 4px;
}
.side-on { width: 41px; margin-right: 0; padding-right: 2px; background: #fcfcfc; border: 1px solid #b0b0b0; border-right: 0; }
.side.off { color: #7a7a7a; }
.splitter { width: 10px; display: flex; align-items: center; justify-content: center; }
.dots { width: 2px; height: 24px; background: repeating-linear-gradient(#b8b8b8 0 2px, transparent 2px 4px); }
.viewer { flex: 1; min-width: 0; min-height: 0; display: flex; background: #a0a0a0; padding: 0 18px 0 15px; }
.page { flex: 1; min-width: 0; position: relative; overflow: hidden; background: #fff; font-family: "Roboto Condensed", Roboto, sans-serif; color: #231f20; }
.waves { position: absolute; left: 0; top: 0; width: 100%; height: 100%; fill: none; stroke: #efefef; stroke-width: 2; }
.page-title { position: relative; margin: 0; padding: 3px 0 0 270px; height: 238px; font-size: 78px; line-height: 80px; font-weight: 300; white-space: nowrap; }
.markets { position: relative; list-style: none; margin: 0 185px 0 1px; padding: 0; display: grid; gap: 27px; }
.market { height: 163px; padding: 66px 0 0 274px; font-size: 33px; font-weight: 500; line-height: 42px; background: #d6ebe7; border-radius: 0 0 38px 0; }

.pin {
  position: absolute; left: 483px; top: 506px; width: 65px; height: 64px; border: 4px solid transparent; padding: 4px 7px 0;
  background: linear-gradient(#d6ebe7, #d6ebe7) padding-box, repeating-conic-gradient(#4a90d9 0 25%, #d6ebe7 0 50%) 0 0 / 4px 4px border-box;
}
.pin svg { display: block; width: 42px; height: 54px; fill: none; }
.leader { position: absolute; left: 518px; top: 545px; width: 92px; height: 252px; fill: rgba(255,0,0,.4); stroke: rgba(255,0,0,.4); }
.note {
  position: absolute; left: 611px; top: 624px; width: 430px; height: 288px; padding: 11px 4px 0 4px;
  background: rgba(255,0,0,.6); border: 3px solid #dc2a2a; border-color: #f03434 #d62828 #d62828 #d62828;
  font-family: "Noto Sans", sans-serif; color: #000;
}
.note-row { display: flex; align-items: center; height: 27px; }
.note-row-2 { margin-top: 10px; }
.note-date { margin-left: auto; }
.note-min { width: 21px; height: 24px; margin: 0 9px 0 11px; background: linear-gradient(#6a7fc0, #6a7fc0) 3px 13px / 12px 3px no-repeat #f82828; border: 2px solid #5a60b0; }
.note-link { margin-left: auto; color: inherit; text-decoration: none; }
.note-text {
  display: block; width: 407px; height: 177px; margin-top: 12px; padding: 7px 8px; resize: none; border: 0;
  border-top: 1px solid #dcb0b0; border-right: 3px solid #dcb0b0; background: rgba(255,176,176,.86); overflow: hidden;
}
.caret { position: absolute; left: 11px; top: 94px; width: 1px; height: 27px; background: #333; }
.note-grip { position: absolute; right: 0; bottom: 0; width: 22px; height: 22px; stroke: #8c0000; stroke-width: 1.4; }

.scroll { width: 21px; display: flex; flex-direction: column; }
.scroll-btn { height: 20px; display: flex; align-items: center; justify-content: center; background: #fafafa; border-bottom: 1px solid #c0c0c0; }
.scroll-btn::before, .step::before { content: ""; border: solid transparent; border-width: 0 6px 6px; border-bottom-color: #5a5a5a; }
.scroll-down { height: 22px; border: 0; border-top: 1px solid #c0c0c0; }
.scroll-down::before, .step-down::before { border-width: 6px 6px 0; border-top-color: #5a5a5a; }
.track { flex: 1; padding-top: 36px; background: #e5e5e5; border-right: 2px solid #dcdcdc; }
.thumb { display: block; height: 42px; background: linear-gradient(90deg, #fff, #f4f4f4); border: solid #b8b8b8; border-width: 2px 0 1px; }

.panel { width: 446px; padding: 2px 0 5px; display: flex; flex-direction: column; }
.panel-title { margin: 0 0 9px; height: 30px; line-height: 30px; font-size: 20px; font-weight: 700; text-align: center; background: #f5f5f5; }
.frame { flex: 1; margin-right: 1px; padding: 0 13px 0 14px; border: 1px solid #c0c0c0; border-top: 0; background: #fefefe; }
.section { display: flex; align-items: center; gap: 10px; height: 38px; margin-bottom: 14px; }
.section::before { content: ""; border: solid transparent; border-width: 0 6px 6px; border-bottom-color: #5a5a5a; margin-left: -4px; }
.form { display: grid; grid-template-columns: 59px 70px 1fr; gap: 9px 0; align-items: center; }
.c2 { grid-column: 2; }
.c3 { grid-column: 3; }
.c23 { grid-column: 2 / 4; }
.body { height: 288px; resize: none; padding: 7px; background: none; border: solid #c0c0c0; border-width: 1px 1px 0 0; overflow: hidden; }
.combo { position: relative; height: 38px; margin-bottom: 1px; border: 1px solid #b0b0b0; border-radius: 4px; background: linear-gradient(#fdfdfd, #ebebeb); }
.combo select { appearance: none; width: 100%; height: 100%; border: 0; background: none; padding: 0 7px; }
.combo .with-swatch { padding-left: 37px; }
.swatch { position: absolute; left: 12px; top: 11px; width: 18px; height: 18px; background: #f00; }
.box {
  grid-column: 1 / 4; min-width: 0; margin: 6px -1px 0 2px; padding: 15px 17px 18px 16px; border: 2px solid #e2e2e2; border-width: 2px 1px; background: #fbfbfb;
  display: grid; grid-template-columns: 1fr 210px; gap: 12px 0; align-items: center;
}
.box .combo { height: 42px; margin: 0; }
.box .combo { margin-bottom: -1px; }
.spin { display: flex; height: 36px; border: 1px solid #b0b0b0; border-radius: 4px; background: #fff; }
.spin input { flex: 1; min-width: 0; border: 0; background: none; padding: 0 6px; }
.steps { width: 22px; border-left: 1px solid #b8b8b8; background: #f5f5f5; display: flex; flex-direction: column; border-radius: 0 4px 4px 0; }
.step { flex: 1; display: flex; align-items: center; justify-content: center; }
.step-off { opacity: .5; }
.locked { grid-column: 1 / 4; display: flex; align-items: center; gap: 8px; height: 34px; }
.locked input { appearance: none; width: 21px; height: 21px; border: 1px solid #b8b8b8; background: #fff; }
.rail-right { width: 45px; padding-left: 3px; background: linear-gradient(#b8b8b8, #b8b8b8) 3px 75px / 2px 100% no-repeat; }
.side-right { width: 40px; height: 75px; display: flex; align-items: center; justify-content: center; color: #4d4d4d; border: 1px solid #b0b0b0; border-left: 0; border-radius: 0 4px 4px 0; border-bottom-width: 2px; padding: 0 0 6px 3px; }

.status { height: 51px; display: flex; align-items: center; justify-content: space-between; padding: 8px 2px 0 3px; }
.size { width: 14px; height: 14px; align-self: flex-end; margin-bottom: 2px; fill: #c4c4c4; }
```

FILE: waves.js
```js
// Each contour is a list of x,y pairs; a smooth curve is drawn through them.
const ys = [298, 536, 712, 902, 1092];
const left = [
  [1020, 1047, 1057, 1041, 978], [1033, 1056, 1066, 1049, 988], [1047, 1065, 1074, 1058, 998],
  [1063, 1076, 1083, 1068, 1009], [1081, 1087, 1093, 1078, 1020], [1100, 1099, 1103, 1088, 1032],
  [1122, 1112, 1114, 1099, 1044], [1147, 1127, 1126, 1110, 1056], [1173, 1144, 1139, 1122, 1069],
  [1203, 1162, 1153, 1134, 1083], [1235, 1182, 1168, 1147, 1097], [1269, 1204, 1185, 1161, 1112],
  [1306, 1228, 1203, 1176, 1127], [1345, 1252, 1221, 1193, 1143], [1386, 1283, 1243, 1211, 1160]
].map(xs => xs.map((x, i) => [x, ys[i]]));
const right = [
  [[1428, 298], [1314, 536], [1266, 712], [1230, 902], [1165, 1105]],
  [[1423, 372], [1348, 536], [1284, 740], [1249, 915], [1190, 1105]],
  [[1423, 442], [1381, 536], [1310, 740], [1272, 915], [1212, 1105]],
  [[1423, 515], [1338, 740], [1298, 915], [1233, 1105]],
  [[1423, 593], [1367, 740], [1322, 915], [1257, 1105], [1188, 1240]],
  [[1423, 677], [1399, 740], [1347, 915], [1282, 1105], [1212, 1243]],
  [[1423, 762], [1372, 915], [1309, 1105], [1236, 1243]],
  [[1423, 850], [1338, 1105], [1261, 1243]],
  [[1423, 935], [1366, 1105], [1291, 1243]],
  [[1423, 1019], [1391, 1105], [1321, 1243]],
  [[1423, 1099], [1353, 1243]],
  [[1423, 1170], [1385, 1243]]
];
const smooth = p => {
  let d = `M${p[0]}`;
  for (let i = 0; i < p.length - 1; i++) {
    const a = p[i - 1] || p[i], b = p[i], c = p[i + 1], e = p[i + 2] || c;
    d += `C${b[0] + (c[0] - a[0]) / 6},${b[1] + (c[1] - a[1]) / 6} ${c[0] - (e[0] - b[0]) / 6},${c[1] - (e[1] - b[1]) / 6} ${c}`;
  }
  return d;
};
const group = document.getElementById("wave-lines");
for (const p of [...left, ...right]) {
  const path = document.createElementNS("http://www.w3.org/2000/svg", "path");
  path.setAttribute("d", smooth(p));
  group.append(path);
}
```
